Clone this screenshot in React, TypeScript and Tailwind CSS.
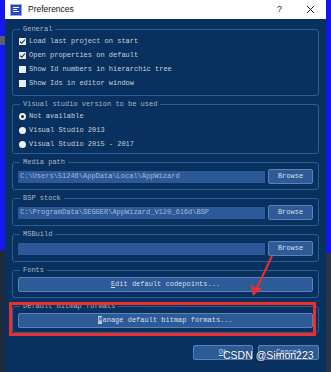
import React from "react";

const mono = { fontFamily: '"Liberation Mono", "DejaVu Sans Mono", monospace' };

function Group({ title, h, children }: { title: string; h: string; children: React.ReactNode }) {
    return (
        <fieldset className={`border border-[#2b5d97] rounded-[3px] px-[5px] ${h}`}>
            <legend className="ml-[2px] px-[3px] text-[7px] leading-[9px] text-[#aab6c6]">{title}</legend>
            {children}
        </fieldset>
    );
}

function Check({ label, checked }: { label: string; checked?: boolean }) {
    return (
        <div className="flex items-center h-[14px] pl-[1px]">
            <div className="w-[7px] h-[7px] bg-[#e8ecf2] flex items-center justify-center">
                {checked && (
                    <svg width="7" height="7" viewBox="0 0 7 7">
                        <path d="M1 3.6 L2.8 5.3 L6 1.5" fill="none" stroke="#222" strokeWidth="1.1" />
                    </svg>
                )}
            </div>
            <span className="ml-[3px] text-[7px] text-[#c9cfd9]">{label}</span>
        </div>
    );
}

function Radio({ label, checked }: { label: string; checked?: boolean }) {
    return (
        <div className="flex items-center h-[14px] pl-[1px]">
            <div className="w-[7px] h-[7px] rounded-full bg-[#eef0f4] flex items-center justify-center">
                {checked && <div className="w-[3px] h-[3px] rounded-full bg-[#1a1a1a]" />}
            </div>
            <span className="ml-[3px] text-[7px] text-[#c9cfd9]">{label}</span>
        </div>
    );
}

function Btn({ children, w }: { children: React.ReactNode; w: string }) {
    return (
        <div className={`${w} h-[15px] shrink-0 rounded-[2px] border border-[#5b82b9] bg-[#2d5b97] flex items-center justify-center text-[7px] text-[#d9dee6]`}>
            {children}
        </div>
    );
}

function PathRow({ value }: { value: string }) {
    return (
        <div className="flex items-center mt-[2px] gap-[3px]">
            <div className="flex-1 h-[12px] bg-[#2c5a98] flex items-center px-[2px] text-[7px] text-[#a9b8cc] whitespace-nowrap overflow-hidden">
                {value}
            </div>
            <Btn w="w-[45px]">Browse</Btn>
        </div>
    );
}

export default function App() {
    return (
        <div className="relative w-[331px] h-[372px] overflow-hidden flex bg-[#0a2f5c]" style={mono}>
            {/* desktop behind the dialog */}
            <div className="w-[5px] flex flex-col">
                <div className="h-[36px] bg-[#1616f2]" />
                <div className="h-[9px] bg-[#5a5f6a]" />
                <div className="h-[205px] bg-[#1616f2]" />
                <div className="flex-1 bg-[#1f2b3d]" />
            </div>

            <div className="w-[321px] flex flex-col bg-[#08315f]">
                <div className="h-[19px] bg-white flex items-center px-[5px]">
                    <div className="w-[12px] h-[12px] bg-[#2747c9] border border-[#8fa6f0] flex flex-col justify-center gap-[1px] px-[2px]">
                        <div className="h-[1px] bg-white" />
                        <div className="h-[1px] w-[4px] bg-white" />
                        <div className="h-[1px] bg-white" />
                    </div>
                    <span className="ml-[6px] text-[8.5px] text-[#111]" style={{ fontFamily: '"Liberation Sans", Arial, sans-serif' }}>
                        Preferences
                    </span>
                    <span className="ml-auto mr-[24px] text-[9px] text-[#222]" style={{ fontFamily: '"Liberation Sans", Arial, sans-serif' }}>?</span>
                    <svg width="9" height="9" viewBox="0 0 9 9" className="mr-[6px]">
                        <path d="M1 1 L8 8 M8 1 L1 8" stroke="#222" strokeWidth="1" />
                    </svg>
                </div>

                <div className="flex flex-col gap-[4px] px-[7px] pt-[6px]">
                    <Group title="General" h="h-[71px]">
                        <Check label="Load last project on start" checked />
                        <Check label="Open properties on default" checked />
                        <Check label="Show Id numbers in hierarchic tree" />
                        <Check label="Show Ids in editor window" />
                    </Group>
                    <Group title="Visual studio version to be used" h="h-[54px]">
                        <Radio label="Not available" checked />
                        <Radio label="Visual Studio 2013" />
                        <Radio label="Visual Studio 2015 - 2017" />
                    </Group>
                    <Group title="Media path" h="h-[32px]">
                        <PathRow value="C:\Users\51246\AppData\Local\AppWizard" />
                    </Group>
                    <Group title="BSP stock" h="h-[32px]">
                        <PathRow value="C:\ProgramData\SEGGER\AppWizard_V120_616d\BSP" />
                    </Group>
                    <Group title="MSBuild" h="h-[32px]">
                        <PathRow value="" />
                    </Group>
                    <Group title="Fonts" h="h-[32px]">
                        <div className="mt-[2px]">
                            <Btn w="w-full">
                                <span><span className="underline">E</span>dit default codepoints...</span>
                            </Btn>
                        </div>
                    </Group>
                    <Group title="Default bitmap formats" h="h-[31px]">
                        <div className="mt-[2px]">
                            <Btn w="w-full">
                                <span><span className="bg-[#c9ced8] text-[#2d5b97]">M</span>anage default bitmap formats...</span>
                            </Btn>
                        </div>
                    </Group>
                </div>

                <div className="flex justify-end gap-[5px] pr-[7px] mt-[12px]">
                    <Btn w="w-[60px]"><span><span className="underline">O</span>k</span></Btn>
                    <Btn w="w-[61px]"><span><span className="underline">C</span>ancel</span></Btn>
                </div>
            </div>

            <div className="w-[5px] flex flex-col">
                <div className="h-[253px] bg-[#1414ee]" />
                <div className="flex-1 bg-[#2a3444]" />
            </div>

            {/* red annotation */}
            <div className="absolute left-[9px] top-[302px] w-[307px] h-[34px] border-[3px] border-[#ec2f2a]" />
            <svg className="absolute left-0 top-0" width="331" height="372" viewBox="0 0 331 372">
                <path d="M272 256 L256 290" stroke="#ec2f2a" strokeWidth="2" />
                <path d="M253 296 L250.5 284 L255 287.5 L262 288 Z" fill="#ec2f2a" />
            </svg>
            <div
                className="absolute left-[223px] top-[349px] text-[10.5px] leading-[13px] text-white"
                style={{ fontFamily: '"Liberation Sans", Arial, sans-serif', textShadow: "0 0 2px rgba(0,0,0,0.6)" }}
            >
                CSDN @Simon223
            </div>
        </div>
    );
}
